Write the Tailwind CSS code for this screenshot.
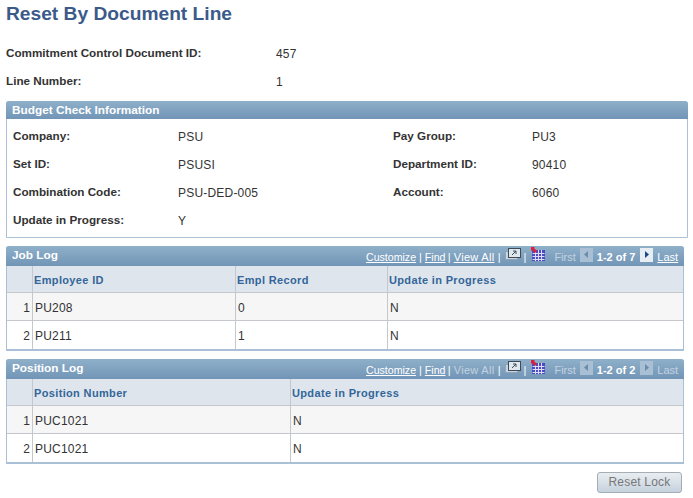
<!DOCTYPE html>
<html lang="en">
<head>
    <meta charset="UTF-8">
    <title>Reset By Document Line</title>
    <script src="https://cdn.jsdelivr.net/npm/@tailwindcss/browser@4"></script>
</head>
<body class="bg-white font-['Liberation_Sans',Arial,sans-serif] text-[12px] tracking-[0.2px] text-[#333] w-[693px] h-[498px] overflow-hidden">
  <div class="pl-[6px] w-[693px]">
    <h1 class="text-[19.2px] tracking-normal leading-[21px] font-bold text-[#3b5a8a] pt-[3px] h-[40px]">Reset By Document Line</h1>

    <div class="grid grid-cols-[270px_1fr] auto-rows-[28px] items-center">
      <div class="font-bold text-[11.7px] tracking-normal -mt-[3px]">Commitment Control Document ID:</div>
      <div>457</div>
      <div class="font-bold text-[11.7px] tracking-normal -mt-[3px]">Line Number:</div>
      <div>1</div>
    </div>

    <!-- budget check -->
    <section class="mt-[5px] w-[682px] h-[137px] border border-[#a9c0d6] rounded-t-[3px]">
      <div class="-mx-px -mt-px h-[18px] rounded-t-[3px] bg-gradient-to-b from-[#8fb0c9] to-[#7295b7] text-white font-bold text-[11.8px] tracking-normal pl-[6px] leading-[18px]">Budget Check Information</div>
      <div class="grid grid-cols-[165px_215px_139px_1fr] auto-rows-[28px] items-center pl-[6px] pt-[4px]">
        <div class="font-bold text-[11.7px] tracking-normal -mt-[3px]">Company:</div><div>PSU</div><div class="font-bold text-[11.7px] tracking-normal -mt-[3px]">Pay Group:</div><div>PU3</div>
        <div class="font-bold text-[11.7px] tracking-normal -mt-[3px]">Set ID:</div><div>PSUSI</div><div class="font-bold text-[11.7px] tracking-normal -mt-[3px]">Department ID:</div><div>90410</div>
        <div class="font-bold text-[11.7px] tracking-normal -mt-[3px]">Combination Code:</div><div>PSU-DED-005</div><div class="font-bold text-[11.7px] tracking-normal -mt-[3px]">Account:</div><div>6060</div>
        <div class="font-bold text-[11.7px] tracking-normal -mt-[3px]">Update in Progress:</div><div>Y</div><div></div><div></div>
      </div>
    </section>

    <!-- job log -->
    <section class="mt-[8px] w-[678px] border-x border-b-2 border-[#a9c0d6] rounded-t-[3px]">
      <div class="-mx-px h-[20px] rounded-t-[3px] bg-gradient-to-b from-[#8fb0c9] to-[#7295b7] flex items-center">
        <span class="text-white font-bold text-[11.8px] tracking-normal pl-[6px] w-[360px]">Job Log</span>
        <div class="flex-1 flex items-center h-full text-[11px] tracking-normal text-white pt-[3px] whitespace-nowrap">
          <a class="underline w-[50px] text-[10.6px]">Customize</a><span class="mx-[3px]">|</span><a class="underline w-[20px] text-[10.6px]">Find</a><span class="mx-[3px]">|</span><a class="underline w-[41px] tracking-[0.3px]">View All</a><span class="mx-[3px]">|</span>
          <svg width="16" height="13" viewBox="0 0 16 13" class="-mt-[6px] ml-[1px]"><rect x="0.5" y="3.500" width="12" height="8" fill="#c9d6e2" stroke="#8fa3b6"/><rect x="3.500" y="0.500" width="12" height="9" fill="#dfe8ef" stroke="#3f4a55"/><path d="M7 7l4-4M8 3h3v3" fill="none" stroke="#3f4a55"/></svg>
          <span class="ml-[3px] mr-[5px]">|</span>
          <svg width="14" height="14" viewBox="0 0 14 14" class="-mt-[7px]"><rect x="1" y="3" width="13" height="11" fill="#4a4ac4"/><path d="M1.500 6.500h12M1.500 9.500h12M1.500 12.500h12M4.500 3v11M7.500 3v11M10.500 3v11" stroke="#dcdcf6"/><path d="M0 0h4l-1 1 3 3-2 2-3-3-1 1z" fill="#d8213a"/></svg>
          <span class="ml-[9px] text-[#c3d2e0]">First</span>
          <svg width="13" height="14" viewBox="0 0 13 14" class="ml-[4px] -mt-[5px]"><rect width="13" height="14" fill="#a9c0d4"/><path d="M8 3v7L4 6.500z" fill="#6a8cac"/></svg>
          <span class="ml-[4px] font-bold">1-2 of 7</span>
          <svg width="13" height="14" viewBox="0 0 13 14" class="ml-[5px] -mt-[5px]"><rect width="13" height="14" fill="#e6edf3"/><path d="M5 3v7l4-3.500z" fill="#1c4a86"/></svg>
          <a class="underline ml-[4px]">Last</a>
        </div>
      </div>
      <div class="grid grid-cols-[26px_203px_152px_1fr]">
        <div class="h-[27px] bg-[#dfe5ec] border-r border-b border-[#c4c8cc]"></div>
        <div class="h-[27px] bg-[#dfe5ec] border-r border-b border-[#c4c8cc] pl-[1px] leading-[28px] text-[11px] tracking-[0.35px] font-bold text-[#33669a]">Employee ID</div>
        <div class="h-[27px] bg-[#dfe5ec] border-r border-b border-[#c4c8cc] pl-[1px] leading-[28px] text-[11px] tracking-[0.35px] font-bold text-[#33669a]">Empl Record</div>
        <div class="h-[27px] bg-[#dfe5ec] border-b border-[#c4c8cc] pl-[1px] leading-[28px] text-[11px] tracking-[0.35px] font-bold text-[#33669a]">Update in Progress</div>

        <div class="h-[28px] bg-[#f6f6f6] border-r border-b border-[#c4c8cc] pr-[2px] text-right leading-[30px]">1</div>
        <div class="h-[28px] bg-[#f6f6f6] border-r border-b border-[#c4c8cc] pl-[2px] leading-[30px]">PU208</div>
        <div class="h-[28px] bg-[#f6f6f6] border-r border-b border-[#c4c8cc] pl-[2px] leading-[30px]">0</div>
        <div class="h-[28px] bg-[#f6f6f6] border-b border-[#c4c8cc] pl-[2px] leading-[30px]">N</div>

        <div class="h-[28px] border-r border-[#c4c8cc] pr-[2px] text-right leading-[30px]">2</div>
        <div class="h-[28px] border-r border-[#c4c8cc] pl-[2px] leading-[30px]">PU211</div>
        <div class="h-[28px] border-r border-[#c4c8cc] pl-[2px] leading-[30px]">1</div>
        <div class="h-[28px] pl-[2px] leading-[30px]">N</div>
      </div>
    </section>

    <!-- position log -->
    <section class="mt-[8px] w-[678px] border-x border-b-2 border-[#a9c0d6] rounded-t-[3px]">
      <div class="-mx-px h-[20px] rounded-t-[3px] bg-gradient-to-b from-[#8fb0c9] to-[#7295b7] flex items-center">
        <span class="text-white font-bold text-[11.8px] tracking-normal pl-[6px] w-[360px]">Position Log</span>
        <div class="flex-1 flex items-center h-full text-[11px] tracking-normal text-white pt-[3px] whitespace-nowrap">
          <a class="underline w-[50px] text-[10.6px]">Customize</a><span class="mx-[3px]">|</span><a class="underline w-[20px] text-[10.6px]">Find</a><span class="mx-[3px]">|</span><span class="w-[41px] tracking-[0.3px] text-[#c3d2e0]">View All</span><span class="mx-[3px]">|</span>
          <svg width="16" height="13" viewBox="0 0 16 13" class="-mt-[6px] ml-[1px]"><rect x="0.5" y="3.500" width="12" height="8" fill="#c9d6e2" stroke="#8fa3b6"/><rect x="3.500" y="0.500" width="12" height="9" fill="#dfe8ef" stroke="#3f4a55"/><path d="M7 7l4-4M8 3h3v3" fill="none" stroke="#3f4a55"/></svg>
          <span class="ml-[3px] mr-[5px]">|</span>
          <svg width="14" height="14" viewBox="0 0 14 14" class="-mt-[7px]"><rect x="1" y="3" width="13" height="11" fill="#4a4ac4"/><path d="M1.500 6.500h12M1.500 9.500h12M1.500 12.500h12M4.500 3v11M7.500 3v11M10.500 3v11" stroke="#dcdcf6"/><path d="M0 0h4l-1 1 3 3-2 2-3-3-1 1z" fill="#d8213a"/></svg>
          <span class="ml-[9px] text-[#c3d2e0]">First</span>
          <svg width="13" height="14" viewBox="0 0 13 14" class="ml-[4px] -mt-[5px]"><rect width="13" height="14" fill="#a9c0d4"/><path d="M8 3v7L4 6.500z" fill="#6a8cac"/></svg>
          <span class="ml-[4px] font-bold">1-2 of 2</span>
          <svg width="13" height="14" viewBox="0 0 13 14" class="ml-[5px] -mt-[5px]"><rect width="13" height="14" fill="#a9c0d4"/><path d="M5 3v7l4-3.500z" fill="#6a8cac"/></svg>
          <span class="ml-[4px] text-[#c3d2e0]">Last</span>
        </div>
      </div>
      <div class="grid grid-cols-[26px_258px_1fr]">
        <div class="h-[27px] bg-[#dfe5ec] border-r border-b border-[#c4c8cc]"></div>
        <div class="h-[27px] bg-[#dfe5ec] border-r border-b border-[#c4c8cc] pl-[1px] leading-[28px] text-[11px] tracking-[0.35px] font-bold text-[#33669a]">Position Number</div>
        <div class="h-[27px] bg-[#dfe5ec] border-b border-[#c4c8cc] pl-[1px] leading-[28px] text-[11px] tracking-[0.35px] font-bold text-[#33669a]">Update in Progress</div>

        <div class="h-[28px] bg-[#f6f6f6] border-r border-b border-[#c4c8cc] pr-[2px] text-right leading-[30px]">1</div>
        <div class="h-[28px] bg-[#f6f6f6] border-r border-b border-[#c4c8cc] pl-[2px] leading-[30px]">PUC1021</div>
        <div class="h-[28px] bg-[#f6f6f6] border-b border-[#c4c8cc] pl-[2px] leading-[30px]">N</div>

        <div class="h-[28px] border-r border-[#c4c8cc] pr-[2px] text-right leading-[30px]">2</div>
        <div class="h-[28px] border-r border-[#c4c8cc] pl-[2px] leading-[30px]">PUC1021</div>
        <div class="h-[28px] pl-[2px] leading-[30px]">N</div>
      </div>
    </section>

    <div class="w-[678px] flex justify-end pr-[2px] pt-[8px]">
      <button class="w-[85px] h-[21px] rounded-[3px] border border-[#a5adb5] bg-gradient-to-b from-[#e9edf1] to-[#c6d2de] text-[#777] text-[12px] leading-[19px]">Reset Lock</button>
    </div>
  </div>
</body>
</html>
